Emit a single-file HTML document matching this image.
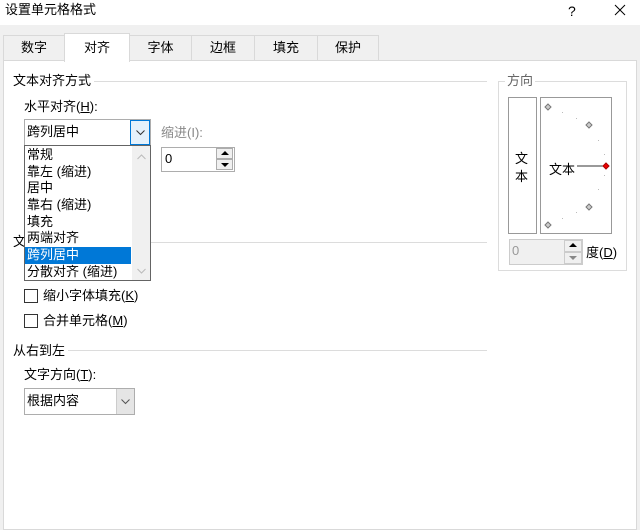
<!DOCTYPE html>
<html><head><meta charset="utf-8"><style>
*{margin:0;padding:0;box-sizing:border-box}
body{width:640px;height:512px;background:#f0f0f0;font-family:"Liberation Sans","Noto Sans CJK SC",sans-serif;font-size:13px;color:#000;position:relative;overflow:hidden}
.a{position:absolute;white-space:nowrap;line-height:16px}
.tab{position:absolute;top:35px;height:26px;border:1px solid #d9d9d9;border-bottom:none;background:#f0f0f0;text-align:center;line-height:24px}
.line{position:absolute;height:1px;background:#dcdcdc}
.box{position:absolute;border:1px solid #adadad;background:#fff}
.cb{position:absolute;width:14px;height:14px;border:1px solid #333;background:#fff}
svg{position:absolute}
</style></head><body>
<div style="position:absolute;left:0;top:0;width:640px;height:25px;background:#fff"></div>
<div class="a" style="left:5px;top:2px">设置单元格格式</div>
<div class="a" style="left:568px;top:3px;font-size:14px">?</div>
<svg style="left:614px;top:4px" width="12" height="12"><path d="M1 1L11 11M11 1L1 11" stroke="#000" stroke-width="1"/></svg>

<div class="tab" style="left:3px;width:62px">数字</div>
<div class="tab" style="left:129px;width:63px">字体</div>
<div class="tab" style="left:191px;width:64px">边框</div>
<div class="tab" style="left:254px;width:64px">填充</div>
<div class="tab" style="left:317px;width:62px">保护</div>
<div style="position:absolute;left:3px;top:60px;width:634px;height:470px;background:#fff;border:1px solid #d9d9d9"></div>
<div class="tab" style="left:64px;top:33px;width:66px;height:29px;background:#fff;line-height:28px">对齐</div>

<div class="a" style="left:13px;top:73px">文本对齐方式</div>
<div class="line" style="left:94px;top:81px;width:393px"></div>
<div class="a" style="left:24px;top:99px">水平对齐(<u>H</u>):</div>
<div class="box" style="left:24px;top:119px;width:127px;height:27px"></div>
<div class="a" style="left:27px;top:124px">跨列居中</div>
<div style="position:absolute;left:130px;top:120px;width:20px;height:25px;background:#e5f1fb;border:1px solid #0078d7"></div>
<svg style="left:136px;top:130px" width="9" height="6"><path d="M0.5 0.5L4.5 4.5L8.5 0.5" fill="none" stroke="#333"/></svg>

<div class="a" style="left:161px;top:125px;color:#888">缩进(I):</div>
<div class="box" style="left:161px;top:147px;width:74px;height:25px"></div>
<div class="a" style="left:165px;top:151px">0</div>
<div style="position:absolute;left:216px;top:148px;width:17px;height:11px;border:1px solid #adadad;background:#f0f0f0"></div>
<div style="position:absolute;left:216px;top:159px;width:17px;height:11px;border:1px solid #adadad;background:#f0f0f0"></div>
<div style="position:absolute;left:221px;top:151px;border:4px solid transparent;border-bottom:4px solid #000;border-top:none"></div>
<div style="position:absolute;left:221px;top:163px;border:4px solid transparent;border-top:4px solid #000;border-bottom:none"></div>

<div class="a" style="left:13px;top:234px">文</div>
<div class="line" style="left:24px;top:242px;width:463px"></div>

<div style="position:absolute;left:24px;top:145px;width:127px;height:136px;border:1px solid #646464;background:#fff"></div>
<div style="position:absolute;left:132px;top:146px;width:18px;height:134px;background:#f0f0f0"></div>
<svg style="left:137px;top:154px" width="9" height="6"><path d="M0.5 5L4.5 1L8.5 5" fill="none" stroke="#bbb"/></svg>
<svg style="left:137px;top:268px" width="9" height="6"><path d="M0.5 1L4.5 5L8.5 1" fill="none" stroke="#bbb"/></svg>
<div style="position:absolute;left:25px;top:247px;width:106px;height:17px;background:#0078d7"></div>
<div class="a" style="left:27px;top:147px">常规</div>
<div class="a" style="left:27px;top:164px">靠左 (缩进)</div>
<div class="a" style="left:27px;top:180px">居中</div>
<div class="a" style="left:27px;top:197px">靠右 (缩进)</div>
<div class="a" style="left:27px;top:214px">填充</div>
<div class="a" style="left:27px;top:230px">两端对齐</div>
<div class="a" style="left:27px;top:247px;color:#fff">跨列居中</div>
<div class="a" style="left:27px;top:264px">分散对齐 (缩进)</div>

<div class="cb" style="left:24px;top:289px"></div>
<div class="a" style="left:43px;top:288px">缩小字体填充(<u>K</u>)</div>
<div class="cb" style="left:24px;top:314px"></div>
<div class="a" style="left:43px;top:313px">合并单元格(<u>M</u>)</div>

<div class="a" style="left:13px;top:343px">从右到左</div>
<div class="line" style="left:68px;top:350px;width:419px"></div>
<div class="a" style="left:24px;top:367px">文字方向(<u>T</u>):</div>
<div class="box" style="left:24px;top:388px;width:111px;height:27px"></div>
<div class="a" style="left:27px;top:393px">根据内容</div>
<div style="position:absolute;left:116px;top:389px;width:18px;height:25px;background:#e5e5e5;border-left:1px solid #ccc"></div>
<svg style="left:121px;top:399px" width="9" height="6"><path d="M0.5 0.5L4.5 4.5L8.5 0.5" fill="none" stroke="#555"/></svg>

<div style="position:absolute;left:498px;top:81px;width:129px;height:190px;border:1px solid #dcdcdc"></div>
<div class="a" style="left:505px;top:73px;background:#fff;padding:0 2px;color:#666">方向</div>
<div style="position:absolute;left:508px;top:97px;width:29px;height:137px;border:1px solid #999"></div>
<div class="a" style="left:515px;top:150px;line-height:18px">文<br>本</div>
<div style="position:absolute;left:540px;top:97px;width:72px;height:137px;border:1px solid #999"></div>
<svg style="left:540px;top:97px" width="72" height="137">
<g fill="#ccc" stroke="#777" stroke-width="1">
<path d="M8 7l3 3-3 3-3-3z"/><path d="M49 25l3 3-3 3-3-3z"/><path d="M49 107l3 3-3 3-3-3z"/><path d="M8 125l3 3-3 3-3-3z"/>
</g>
<g fill="#bbb"><rect x="22" y="15" width="1" height="1"/><rect x="36" y="21" width="1" height="1"/><rect x="58" y="43" width="1" height="1"/><rect x="64" y="57" width="1" height="1"/><rect x="64" y="78" width="1" height="1"/><rect x="58" y="92" width="1" height="1"/><rect x="36" y="115" width="1" height="1"/><rect x="22" y="121" width="1" height="1"/></g>
<line x1="37" y1="69" x2="63" y2="69" stroke="#333"/>
<path d="M66 66l3 3-3 3-3-3z" fill="#e00" stroke="#a00"/>
</svg>
<div class="a" style="left:549px;top:162px">文本</div>
<div style="position:absolute;left:509px;top:239px;width:74px;height:26px;border:1px solid #ccc;background:#f0f0f0"></div>
<div class="a" style="left:512px;top:243px;color:#999">0</div>
<div style="position:absolute;left:564px;top:240px;width:18px;height:12px;border:1px solid #ccc;background:#f0f0f0"></div>
<div style="position:absolute;left:564px;top:252px;width:18px;height:12px;border:1px solid #ccc;background:#f0f0f0"></div>
<div style="position:absolute;left:569px;top:243px;border:4px solid transparent;border-bottom:4px solid #000;border-top:none"></div>
<div style="position:absolute;left:569px;top:256px;border:4px solid transparent;border-top:4px solid #888;border-bottom:none"></div>
<div class="a" style="left:586px;top:245px">度(<u>D</u>)</div>
</body></html>
